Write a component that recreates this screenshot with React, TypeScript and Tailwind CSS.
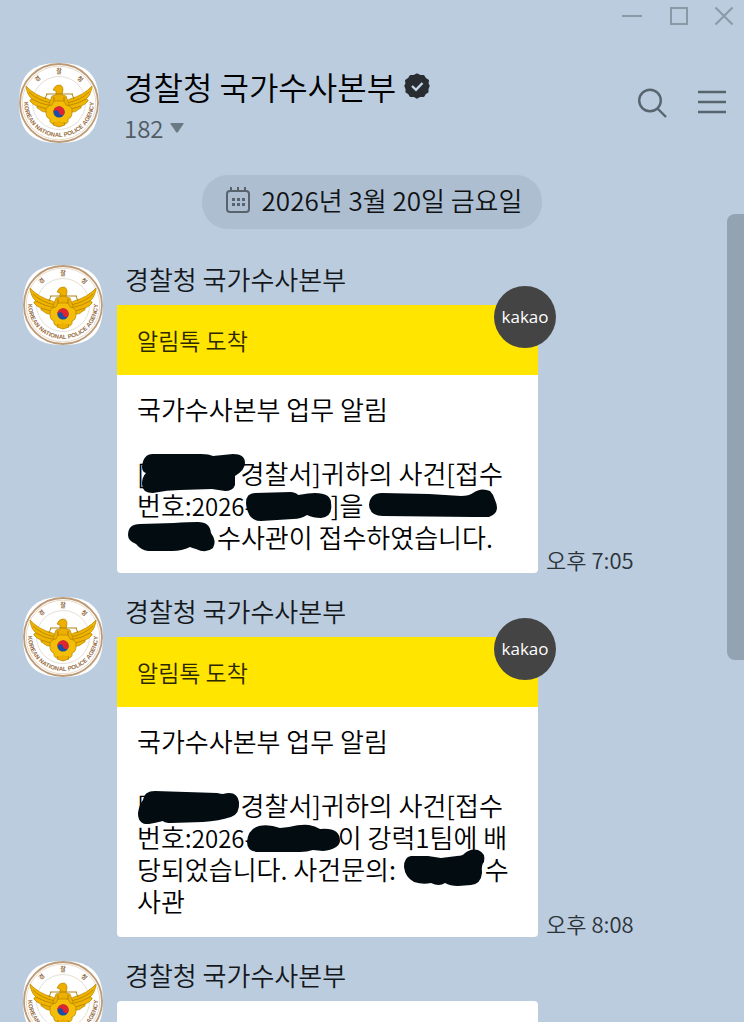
import { useId, type ReactNode } from "react";

const SENDER = "경찰청 국가수사본부";

function FeatherWing() {
  return (
    <g>
      <path
        d="M36 40 L29 36 Q15 32 7 23 Q8 32 13 36 Q10 37 11 38 Q14 42 18 43 Q17 45 20 46 Q24 50 28 49 Q29 52 35 53 Z"
        fill="#efb400"
        stroke="#c08c00"
        strokeWidth="0.8"
      />
      <path
        d="M10 29 Q18 37 32 40 M13 36 Q21 41 33 43 M18 43 Q26 46 34 47 M28 49 L35 50"
        fill="none"
        stroke="#b08000"
        strokeWidth="0.8"
      />
    </g>
  );
}

function Avatar() {
  const id = useId();
  return (
    <svg viewBox="0 0 80 80" className="size-20 shrink-0" role="img" aria-label={SENDER}>
      <path
        d="M40 0 C68 0 80 12 80 40 C80 68 68 80 40 80 C12 80 0 68 0 40 C0 12 12 0 40 0Z"
        fill="#fff"
      />
      <circle cx="40" cy="40" r="39" fill="none" stroke="#bb9a75" strokeWidth="1.8" />
      <circle cx="40" cy="40" r="36.8" fill="none" stroke="#e3cfb8" strokeWidth="0.8" />
      <circle cx="40" cy="40" r="26.5" fill="none" stroke="#ddd6cc" strokeWidth="0.8" />
      <path id={`${id}b`} d="M5 39 A35 35 0 0 0 75 39" fill="none" />
      <path id={`${id}t`} d="M10 40 A30 30 0 0 1 70 40" fill="none" />
      <text fontSize="6" fontWeight="700" fill="#946a3e" fontFamily="Liberation Sans, sans-serif" textAnchor="middle">
        <textPath href={`#${id}b`} startOffset="50%">
          KOREAN NATIONAL POLICE AGENCY
        </textPath>
      </text>
      <g fontSize="6" fontWeight="700" fill="#8f6a42" fontFamily="Noto Sans CJK KR, sans-serif" textAnchor="middle">
        <text>
          <textPath href={`#${id}t`} startOffset="27%">경</textPath>
        </text>
        <text>
          <textPath href={`#${id}t`} startOffset="50%">찰</textPath>
        </text>
        <text>
          <textPath href={`#${id}t`} startOffset="73%">청</textPath>
        </text>
      </g>
      <FeatherWing />
      <g transform="translate(80 0) scale(-1 1)">
        <FeatherWing />
      </g>
      <path
        d="M34 27 Q36 22 40 22 Q44 22 44 27 L43 32 L47 33 L50 41 L45 46 L40 43 L34 46 L30 41 L33 33 L37 32 L37 28Z"
        fill="#edb000"
        stroke="#b88500"
        strokeWidth="0.7"
      />
      <path d="M27 31 H54 M28 31 L26 36 M53 31 L55 36 M35 34 V42 M45 34 V42" fill="none" stroke="#a87900" strokeWidth="0.9" />
      <path
        d="M40 38 Q46 37 47 42 Q54 43 53 49 Q53 55 49 56 Q50 61 44 61 L40 59 L36 61 Q30 61 31 56 Q27 55 27 49 Q26 43 33 42 Q34 37 40 38Z"
        fill="#f3bd08"
        stroke="#bd8800"
        strokeWidth="0.8"
      />
      <path d="M35 59 L34 62 L40 64 L46 62 L45 59" fill="#edb000" stroke="#b07d00" strokeWidth="0.7" />
      <circle cx="40" cy="49" r="5.6" fill="#174ea6" />
      <path d="M34.5 50 A5.6 5.6 0 1 1 45.6 49 A2.8 2.8 0 0 1 40 49.4 A2.8 2.8 0 0 0 34.5 50Z" fill="#e0242f" />
    </svg>
  );
}

// Marker stroke laid over the hidden part of a line; width is the room it keeps in the text
function Redacted({ width, d }: { width: string; d: string }) {
  return (
    <span className={`relative inline-block h-8 align-top ${width}`}>
      <svg className="absolute inset-0 size-full overflow-visible" aria-hidden="true">
        <path d={d} fill="#020c11" />
      </svg>
    </span>
  );
}

function Message({ time, children }: { time?: string; children?: ReactNode }) {
  return (
    <article className="flex gap-3.5">
      <Avatar />
      <div className="min-w-0 flex-1">
        <h2 className="h-10 pl-2 text-[26px] leading-7 text-[#15181b]">{SENDER}</h2>
        <div className="flex items-end gap-2">
          <div className="relative w-[421px] shrink-0 rounded-sm bg-white">
            {children ? (
              <>
                <div className="flex h-[70px] items-center bg-[#ffe500] px-5 text-[23px] text-[#2c2800]">
                  알림톡 도착
                </div>
                <span className="absolute -top-[19px] -right-[18px] flex size-[62px] items-center justify-center rounded-full bg-[#444] font-['Open_Sans',sans-serif] text-[17px] font-normal text-white">
                  kakao
                </span>
                <div className="px-5 pt-[18px] pb-5 text-[26px] leading-8 whitespace-nowrap text-black">
                  <p>국가수사본부 업무 알림</p>
                  <div className="pt-8">{children}</div>
                </div>
              </>
            ) : (
              <div className="h-[268px]" />
            )}
          </div>
          {time && <time className="text-[22px] leading-7 text-[#2b3238]">{time}</time>}
        </div>
      </div>
    </article>
  );
}

export default function App() {
  return (
    <div className="flex h-screen flex-col overflow-hidden bg-[#baccde] font-['Noto_Sans_CJK_KR',sans-serif] font-[350]">
      <div className="flex h-8 shrink-0 justify-end gap-[25px] pr-2.5 text-[#8b99a7]">
        <button type="button" aria-label="최소화" className="flex h-8 w-[22px] items-center">
          <svg viewBox="0 0 22 20" className="h-5 w-[22px]" fill="none" stroke="currentColor" strokeWidth="2">
            <path d="M0 10H20" />
          </svg>
        </button>
        <button type="button" aria-label="최대화" className="flex h-8 w-5 items-center">
          <svg viewBox="0 0 20 20" className="size-5" fill="none" stroke="currentColor" strokeWidth="2">
            <path d="M2 2H18V18H2Z" />
          </svg>
        </button>
        <button type="button" aria-label="닫기" className="flex h-8 w-5 items-center">
          <svg viewBox="0 0 20 20" className="size-5" fill="none" stroke="currentColor" strokeWidth="2">
            <path d="M1.5 1.5L18.5 18.5M18.5 1.5L1.5 18.5" />
          </svg>
        </button>
      </div>

      <header className="flex shrink-0 items-start gap-[25px] pt-[31px] pr-[18px] pl-[19px]">
        <Avatar />
        <div className="min-w-0 flex-1 pt-1">
          <div className="flex items-center gap-2">
            <h1 className="text-[32px] leading-[38px] whitespace-nowrap text-black">{SENDER}</h1>
            <svg viewBox="0 0 26 26" className="size-[26px] shrink-0" role="img" aria-label="인증됨">
              <path
                d="M13 1.5 L16 3 L19.5 3 L21 5.5 L24 7.5 L23.5 10.5 L24.7 13 L23.5 16 L23.5 19 L21 20.5 L19.5 23 L16 23 L13 24.7 L10 23 L6.5 23 L5 20.5 L2.5 19 L2.5 16 L1.3 13 L2.5 10.5 L2 7.5 L5 5.5 L6.5 3 L10 3Z"
                fill="#292d31"
                stroke="#292d31"
                strokeWidth="2"
                strokeLinejoin="round"
              />
              <path d="M8 13 L12 16.8 L18.5 10" fill="none" stroke="#c6d6e6" strokeWidth="2.4" />
            </svg>
          </div>
          <button type="button" className="flex h-[46px] items-center gap-1.5 text-2xl text-[#505b63]">
            182
            <svg viewBox="0 0 14 10" className="h-2.5 w-3.5" aria-hidden="true">
              <path d="M1 0H13Q14 0 13.5 1L8 9Q7 10 6 9L0.5 1Q0 0 1 0Z" fill="#6b7984" />
            </svg>
          </button>
        </div>
        <div className="flex items-center gap-[30px] pt-6 text-[#58656e]">
          <button type="button" aria-label="검색">
            <svg viewBox="0 0 32 32" className="size-8" fill="none" stroke="currentColor" strokeWidth="2.4">
              <circle cx="14" cy="13.5" r="10.8" />
              <path d="M21.5 21.5L30 30" />
            </svg>
          </button>
          <button type="button" aria-label="메뉴">
            <svg viewBox="0 0 28 32" className="h-8 w-7" fill="none" stroke="currentColor" strokeWidth="2.4">
              <path d="M0 5H28M0 15H28M0 25H28" />
            </svg>
          </button>
        </div>
      </header>

      <main className="relative min-h-0 flex-1 overflow-hidden">
        <div className="flex justify-center pt-6">
          <div className="flex h-[54px] items-center gap-3 rounded-[26px] bg-[#adbed1] pr-5 pb-1 pl-6 text-[26px] text-[#101214]">
            <svg viewBox="0 0 24 26" className="h-[26px] w-6" fill="none" stroke="#59636d" strokeWidth="2" aria-hidden="true">
              <rect x="1" y="4" width="22" height="21" rx="3" />
              <path d="M5 0V4M12 0V4M19 0V4" />
              <path d="M6 12.5H9M11 12.5H14M16 12.5H19M6 17.5H9M11 17.5H14M16 17.5H19" strokeWidth="3" />
            </svg>
            <time dateTime="2026-03-20" className="leading-8">2026년 3월 20일 금요일</time>
          </div>
        </div>

        <div className="flex flex-col gap-6 pt-9 pl-[23px]">
          <Message time="오후 7:05">
            <p className="h-8">
              [
              <Redacted
                width="w-[95px]"
                d="M-4 10Q-3 -3 7 -3L55 -3Q63 -3 67 -1L87 -3Q99 -3 99 6Q99 13 89 19L89 28Q87 34 79 34L66 32L34 33Q21 33 7 36Q-4 36 -4 27Q-4 20 0 16Q-4 15 -4 10Z"
              />
              경찰서]귀하의 사건[접수
            </p>
            <p className="h-8">
              번호:<span className="text-2xl leading-8">2026-</span>
              <Redacted
                width="w-[78px]"
                d="M-7 14Q-7 4 2 4L38 3Q44 4 45 6Q56 4 62 4Q78 4 78 14Q80 28 68 29Q60 29 54 26Q48 30 40 30L8 32Q-2 32 -5 23Q-7 18 -7 14Z"
              />
              ]을{" "}
              <Redacted
                width="w-32"
                d="M0 16Q1 4 13 4L60 5L92 7Q100 7 104 4Q112 -2 121 2Q125 6 126 11Q132 24 120 28L104 28L14 27Q1 27 0 16Z"
              />
            </p>
            <p className="h-8">
              <Redacted
                width="w-20"
                d="M-9 14Q-9 3 3 3L37 2Q51 1 61 1Q73 1 74 12Q80 20 76 27Q69 33 59 28Q55 27 53 26Q45 30 35 30L11 30Q4 29 -1 23Q-9 20 -9 14Z"
              />
              수사관이 접수하였습니다.
            </p>
          </Message>

          <Message time="오후 8:08">
            <p className="h-8">
              [
              <Redacted
                width="w-[95px]"
                d="M-8 24Q-7 16 -3 11Q-2 2 9 2L71 4Q75 5 77 5Q91 1 93 13Q94 25 85 28Q73 32 57 33L25 34Q19 34 17 32Q9 34 3 35Q-8 36 -8 24Z"
              />
              경찰서]귀하의 사건[접수
            </p>
            <p className="h-8">
              번호:<span className="text-2xl leading-8">2026-</span>
              <Redacted
                width="w-[85px]"
                d="M-6 21Q-5 8 6 5Q16 3 27 7L36 6Q48 3 56 4Q62 5 67 8Q87 6 87 20Q86 28 70 30L60 29Q54 31 47 31L6 31Q-6 31 -6 21Z"
              />
              이 강력1팀에 배
            </p>
            <p className="h-8">
              당되었습니다. 사건문의:{" "}
              <Redacted
                width="w-[83px]"
                d="M2 14Q2 4 9 3L26 3L39 5L55 3Q61 3 63 0Q69 -5 76 -3Q84 0 82 9Q79 12 80 20Q79 31 69 32L56 33Q48 33 43 30Q37 34 29 30Q21 32 12 29Q3 24 2 14Z"
              />
              수
            </p>
            <p className="h-8">사관</p>
          </Message>

          <Message />
        </div>

        {/* scroll thumb */}
        <div className="absolute top-[63px] right-0 h-[446px] w-[17px] rounded-l-lg bg-[#94a3b2]" />
      </main>
    </div>
  );
}
